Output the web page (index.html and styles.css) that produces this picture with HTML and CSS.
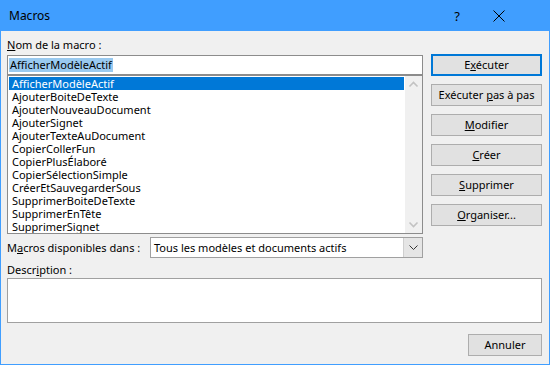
FILE: index.html
```html
<!DOCTYPE html>
<html lang="fr">
<head>
    <meta charset="UTF-8">
    <title>Macros</title>
    <link rel="stylesheet" href="styles.css">
</head>
<body>
    <div class="window">
        <div class="titlebar">
            <span class="title">Macros</span>
            <span class="help">?</span>
            <svg class="close" width="12" height="12" viewBox="0 0 12 12">
                <path d="M0.5 0.5 L11.5 11.5 M11.5 0.5 L0.5 11.5" stroke="#000" stroke-width="1" fill="none"/>
            </svg>
        </div>

        <div class="content">
            <div class="top">
                <div class="left">
                    <div class="label"><u>N</u>om de la macro :</div>
                    <div class="name-input"><span class="sel-text">AfficherModèleActif</span></div>
                    <div class="listbox">
                        <ul class="items">
                            <li class="selected">AfficherModèleActif</li>
                            <li>AjouterBoiteDeTexte</li>
                            <li>AjouterNouveauDocument</li>
                            <li>AjouterSignet</li>
                            <li>AjouterTexteAuDocument</li>
                            <li>CopierCollerFun</li>
                            <li>CopierPlusÉlaboré</li>
                            <li>CopierSélectionSimple</li>
                            <li>CréerEtSauvegarderSous</li>
                            <li>SupprimerBoiteDeTexte</li>
                            <li>SupprimerEnTête</li>
                            <li>SupprimerSignet</li>
                        </ul>
                        <div class="scrollbar">
                            <svg width="17" height="17" viewBox="0 0 17 17">
                                <path d="M4.5 10.5 L8.5 6.5 L12.5 10.5" stroke="#c2c2c2" stroke-width="1.6" fill="none"/>
                            </svg>
                            <svg width="17" height="17" viewBox="0 0 17 17">
                                <path d="M4.5 6.5 L8.5 10.5 L12.5 6.5" stroke="#c2c2c2" stroke-width="1.6" fill="none"/>
                            </svg>
                        </div>
                    </div>
                </div>

                <div class="buttons">
                    <button class="btn default">E<u>x</u>écuter</button>
                    <button class="btn">Exécuter <u>p</u>as à pas</button>
                    <button class="btn"><u>M</u>odifier</button>
                    <button class="btn"><u>C</u>réer</button>
                    <button class="btn"><u>S</u>upprimer</button>
                    <button class="btn"><u>O</u>rganiser...</button>
                </div>
            </div>

            <div class="scope-row">
                <div class="scope-label">M<u>a</u>cros disponibles dans :</div>
                <div class="combo">
                    <span class="combo-text">Tous les modèles et documents actifs</span>
                    <div class="combo-btn">
                        <svg width="9" height="5" viewBox="0 0 9 5">
                            <path d="M0.5 0.5 L4.5 4.5 L8.5 0.5" stroke="#333" stroke-width="1" fill="none"/>
                        </svg>
                    </div>
                </div>
            </div>

            <div class="label desc-label">Descr<u>i</u>ption :</div>
            <div class="desc-box"></div>

            <div class="footer">
                <button class="btn cancel">Annuler</button>
            </div>
        </div>
    </div>
</body>
</html>
```

FILE: styles.css
```css
body {
    margin: 0;
    font-family: "Noto Sans", "Open Sans", sans-serif;
    font-size: 11px;
    color: #000;
}
.window {
    width: 550px;
    height: 365px;
    box-sizing: border-box;
    border: 1px solid #409eff;
    border-top: none;
    background-color: #f0f0f0;
}
.titlebar {
    height: 31px;
    margin: 0 -1px;
    background-color: #409eff;
    display: flex;
    align-items: center;
    padding-left: 9px;
    font-size: 12px;
}
.title {
    flex: 1;
}
.help {
    font-size: 13px;
    margin-right: 33px;
}
.close {
    margin-right: 45px;
}
.content {
    padding: 6px 7px 0 6px;
}
.top {
    display: grid;
    grid-template-columns: 416px 111px;
    column-gap: 8px;
}
.label {
    height: 15px;
    line-height: 15px;
}
.name-input {
    margin-top: 3px;
    height: 20px;
    box-sizing: border-box;
    border: 1px solid #8c8c8c;
    background-color: #fff;
    padding: 2px 1px;
    line-height: 14px;
}
.sel-text {
    display: inline-block;
    background-color: #99c9ef;
    padding: 0 1px;
}
.listbox {
    height: 159px;
    box-sizing: border-box;
    border: 1px solid #8c8c8c;
    background-color: #fff;
    display: flex;
    overflow: hidden;
}
.items {
    list-style: none;
    margin: 0;
    padding: 1px;
    flex: 1;
}
.items li {
    height: 13px;
    line-height: 13px;
    padding-left: 3px;
    white-space: nowrap;
}
.items li.selected {
    background-color: #0078d7;
    color: #fff;
}
.scrollbar {
    width: 17px;
    background-color: #f0f0f0;
    display: flex;
    flex-direction: column;
    justify-content: space-between;
}
.scrollbar svg {
    display: block;
}
.buttons {
    padding-top: 17px;
    display: flex;
    flex-direction: column;
    gap: 8px;
}
.btn {
    height: 22px;
    box-sizing: border-box;
    border: 1px solid #adadad;
    background-color: #e1e1e1;
    font-family: inherit;
    font-size: 11px;
    color: #000;
    padding: 0;
    line-height: 18px;
}
.btn.default {
    border: 2px solid #0078d7;
}
.scope-row {
    margin-top: 3px;
    display: flex;
    align-items: center;
}
.scope-label {
    width: 143px;
    line-height: 15px;
    white-space: nowrap;
}
.combo {
    width: 273px;
    height: 21px;
    box-sizing: border-box;
    border: 1px solid #a0a0a0;
    background-color: #fff;
    display: flex;
    align-items: center;
}
.combo-text {
    flex: 1;
    padding-left: 3px;
}
.combo-btn {
    width: 18px;
    height: 100%;
    background-color: #e5e5e5;
    border-left: 1px solid #cfcfcf;
    display: flex;
    align-items: center;
    justify-content: center;
}
.combo-btn svg {
    display: block;
}
.desc-label {
    margin-top: 4px;
}
.desc-box {
    margin-top: 1px;
    height: 45px;
    box-sizing: border-box;
    border: 1px solid #a0a0a0;
    background-color: #fff;
}
.footer {
    margin-top: 11px;
    display: flex;
    justify-content: flex-end;
}
.btn.cancel {
    width: 74px;
}
```
